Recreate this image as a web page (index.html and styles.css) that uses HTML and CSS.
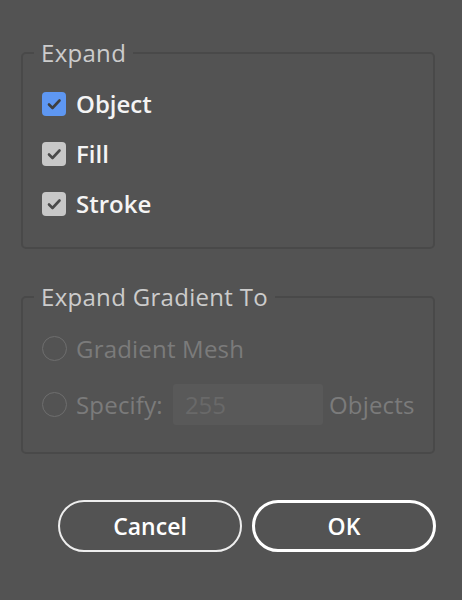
FILE: index.html
```html
<!DOCTYPE html>
<html lang="en">
<head>
<meta charset="utf-8">
<title>Expand</title>
<link rel="stylesheet" href="styles.css">
</head>
<body>
<div class="dialog">
  <fieldset class="group group-expand">
    <legend class="group-title">Expand</legend>
    <div class="options">
      <label class="check-row">
        <span class="checkbox checkbox-focus">
          <svg viewBox="0 0 24 24" width="24" height="24"><path d="M7 12.5 L10.5 16 L17.5 8.5" fill="none" stroke="#3f3f3f" stroke-width="2.6" stroke-linecap="round" stroke-linejoin="round"/></svg>
        </span>
        <span class="label">Object</span>
      </label>
      <label class="check-row">
        <span class="checkbox">
          <svg viewBox="0 0 24 24" width="24" height="24"><path d="M7 12.5 L10.5 16 L17.5 8.5" fill="none" stroke="#4a4a4a" stroke-width="2.6" stroke-linecap="round" stroke-linejoin="round"/></svg>
        </span>
        <span class="label">Fill</span>
      </label>
      <label class="check-row">
        <span class="checkbox">
          <svg viewBox="0 0 24 24" width="24" height="24"><path d="M7 12.5 L10.5 16 L17.5 8.5" fill="none" stroke="#4a4a4a" stroke-width="2.6" stroke-linecap="round" stroke-linejoin="round"/></svg>
        </span>
        <span class="label">Stroke</span>
      </label>
    </div>
  </fieldset>

  <fieldset class="group group-gradient">
    <legend class="group-title">Expand Gradient To</legend>
    <div class="options options-gradient">
      <div class="radio-row">
        <span class="radio"></span>
        <span class="label label-disabled">Gradient Mesh</span>
      </div>
      <div class="radio-row radio-row-input">
        <span class="radio"></span>
        <span class="label label-disabled">Specify:</span>
        <span class="num-input">255</span>
        <span class="label label-disabled">Objects</span>
      </div>
    </div>
  </fieldset>

  <div class="buttons">
    <button class="btn">Cancel</button>
    <button class="btn btn-primary">OK</button>
  </div>
</div>
</body>
</html>
```
FILE: styles.css
```css
* { box-sizing: border-box; }
html, body {
  margin: 0;
  padding: 0;
  background: #535353;
}
body {
  font-family: "Open Sans", "DejaVu Sans", sans-serif;
  color: #f0f0f0;
}
.dialog {
  padding: 41px 0 0 21px;
  width: 436px;
}
.group {
  margin: 0;
  width: 414px;
  border: 2px solid #494949;
  border-radius: 5px;
  padding: 27px 0 31px 11px;
  min-width: 0;
}
.group-gradient {
  margin-top: 36px;
  padding: 27px 0 27px 11px;
}
.group-title {
  padding: 0 7px;
  font-size: 24px;
  line-height: 24px;
  height: 24px;
  color: #cccccc;
  font-weight: 400;
  letter-spacing: 0.3px;
}
.options {
  display: flex;
  flex-direction: column;
  gap: 26px;
  padding-left: 8px;
}
.options-gradient {
  gap: 23px;
}
.check-row, .radio-row {
  display: flex;
  align-items: center;
  height: 24px;
}
.radio-row { height: 25px; }
.radio-row-input { height: 41px; }
.checkbox {
  width: 24px;
  height: 24px;
  border-radius: 4px;
  background: #c8c8c8;
  display: flex;
  flex-shrink: 0;
}
.checkbox-focus { background: #5e97f2; }
.label {
  font-size: 24px;
  line-height: 24px;
  font-weight: 600;
  margin-left: 10px;
  color: #f4f4f4;
}
.label-disabled {
  color: #7b7b7b;
  font-weight: 400;
  margin-left: 9px;
  letter-spacing: 0.2px;
}
.radio {
  width: 25px;
  height: 25px;
  border-radius: 50%;
  border: 1.5px solid #6e6e6e;
  flex-shrink: 0;
}
.num-input {
  width: 150px;
  height: 41px;
  margin-left: 10px;
  background: #595959;
  border-radius: 3px;
  color: #696969;
  font-size: 24px;
  line-height: 41px;
  padding-left: 12px;
}
.num-input + .label { margin-left: 6px; }
.buttons {
  display: flex;
  gap: 10px;
  margin-top: 46px;
  padding-left: 37px;
}
.btn {
  width: 184px;
  height: 52px;
  border: 2px solid #eeeeee;
  border-radius: 26px;
  background: transparent;
  color: #ffffff;
  font-family: "Open Sans", "DejaVu Sans", sans-serif;
  font-size: 23px;
  font-weight: 600;
  padding: 0;
}
.btn-primary {
  border-width: 3px;
  border-color: #ffffff;
}
```
